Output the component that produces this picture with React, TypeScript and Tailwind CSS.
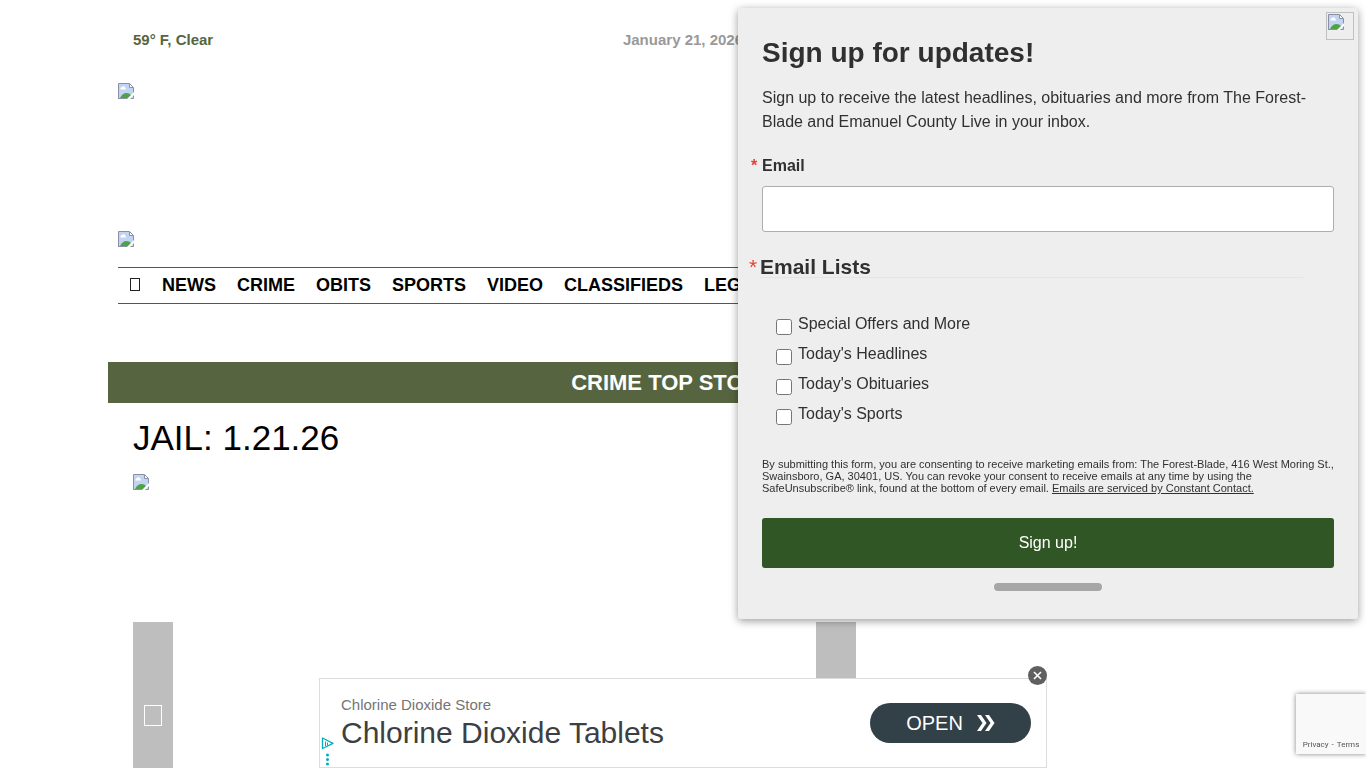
import { useState } from "react";

const navLinks = ["NEWS", "CRIME", "OBITS", "SPORTS", "VIDEO", "CLASSIFIEDS", "LEGALS"];

const emailLists = [
    "Special Offers and More",
    "Today's Headlines",
    "Today's Obituaries",
    "Today's Sports",
];

function MissingImage() {
    return (
        <svg className="block size-4" viewBox="0 0 16 16" aria-hidden="true">
            <path d="M0.5 0.5H11.5L15.5 4.5V15.5H0.5Z" fill="#c3d3f2" />
            <path d="M2.5 6.5V5.2Q2.6 4.2 3.8 4.2Q4.4 3 5.6 3.2Q6.8 3.3 7 4.4Q8 4.8 8 6.5Z" fill="#fff" />
            <path d="M2 15Q4.5 10 8.5 10Q11.5 10.2 13 12V15Z" fill="#4ea346" />
            <path d="M11.5 0.5V4.5H15.5Z" fill="#fff" />
            <path d="M0.5 16V0.5H11.5L15.5 4.5V15.5H0" fill="none" stroke="#8a8fa6" />
            <path d="M11.5 1V4.5H15" fill="none" stroke="#8a8fa6" />
            <path d="M16 9V12L12 16H9Z" fill="#fff" />
        </svg>
    );
}

function Header() {
    return (
        <header className="px-[10px]">
            <div className="grid grid-cols-3 px-[15px] pt-[30px] text-[15px] leading-5 font-bold">
                <span className="text-[#56653f]">59° F, Clear</span>
                <span className="text-center text-[#999]">January 21, 2026</span>
            </div>
            <a href="#" aria-label="Home page" className="mt-[33px] block h-[148px]">
                <MissingImage />
            </a>
            <a href="#" aria-label="Advertisement" className="block h-9">
                <MissingImage />
            </a>
            <nav className="flex h-[37px] items-center gap-[21px] border-y border-[#555] px-[10px] pb-[2px] text-lg font-bold text-black">
                <a href="#" aria-label="Home" className="pr-px pl-[2px]">
                    <span className="block h-[13px] w-[10px] border border-[#222]" />
                </a>
                {navLinks.map((link) => (
                    <a key={link} href="#" className="leading-5">{link}</a>
                ))}
            </nav>
        </header>
    );
}

function TopStories() {
    return (
        <main className="mt-[58px]">
            <h2 className="bg-[#56653f] text-center text-[22px] leading-[41px] font-bold text-white">CRIME TOP STORIES</h2>
            <article className="px-[25px]">
                <h1 className="pt-[14px] text-[35px] leading-[42px] text-black">JAIL: 1.21.26</h1>
                <div className="mt-[15px] h-[148px]">
                    <MissingImage />
                </div>
                <div className="flex w-[723px] justify-between">
                    <button aria-label="Previous" className="flex h-[186px] w-10 items-center justify-center bg-[#bebebe]">
                        <span className="h-[21px] w-[18px] border border-white" />
                    </button>
                    <button aria-label="Next" className="flex h-[186px] w-10 items-center justify-center bg-[#bebebe]">
                        <span className="h-[21px] w-[18px] border border-white" />
                    </button>
                </div>
            </article>
        </main>
    );
}

function SignupPopup({ onClose }: { onClose: () => void }) {
    return (
        <form
            className="fixed top-2 right-2 w-[620px] rounded-[3px] bg-[#eee] px-6 pb-7 text-base leading-6 text-[#303030] shadow-[0_2px_8px_rgba(0,0,0,0.4)]"
            onSubmit={(e) => e.preventDefault()}
        >
            <button
                type="button"
                aria-label="Close"
                onClick={onClose}
                className="absolute top-1 right-1 flex size-7 items-start border border-[#c0c0c0] p-px"
            >
                <MissingImage />
            </button>
            <h2 className="pt-[25px] text-[28px] leading-10 font-bold">Sign up for updates!</h2>
            <p className="mt-3 pt-px">
                Sign up to receive the latest headlines, obituaries and more from The Forest-Blade and Emanuel County Live in your inbox.
            </p>
            <label htmlFor="email" className="relative mt-5 block font-bold">
                <span className="absolute -left-[11px] text-[#e8402f]">*</span>
                Email
            </label>
            <input
                id="email"
                type="email"
                className="mt-2 block h-[46px] w-full rounded-[3px] border border-[#adadad] bg-white px-3"
            />
            <fieldset className="mt-5 -ml-[2px]">
                <legend className="relative w-[543px] border-b border-[#e4e4e4] pt-1 text-[21px] leading-[21px] font-bold">
                    <span className="absolute -left-[11px] font-normal text-[#e8402f]">*</span>
                    Email Lists
                </legend>
                <div className="mt-[31px] ml-4">
                    {emailLists.map((list) => (
                        <label key={list} className="flex h-[30px] gap-[6px] pt-[3px]">
                            <input type="checkbox" className="mt-[7px] size-4" />
                            {list}
                        </label>
                    ))}
                </div>
            </fieldset>
            <p className="mt-[29px] text-[11px] leading-3">
                By submitting this form, you are consenting to receive marketing emails from: The Forest-Blade, 416 West Moring St., Swainsboro, GA, 30401, US. You can revoke your consent to receive emails at any time by using the SafeUnsubscribe® link, found at the bottom of every email.{" "}
                <a href="#" className="underline">Emails are serviced by Constant Contact.</a>
            </p>
            <button type="submit" className="mt-6 h-[50px] w-full rounded-[3px] bg-[#315625] text-white">Sign up!</button>
            <div className="mx-auto mt-[15px] h-2 w-[108px] rounded-full bg-[#a6a6a6]" />
        </form>
    );
}

function AdBanner({ onClose }: { onClose: () => void }) {
    return (
        <aside className="fixed inset-x-0 bottom-0 mx-auto flex h-[90px] w-[728px] items-center justify-between border border-[#dcdcdc] bg-white pr-[15px] pl-[21px]">
            <div>
                <p className="text-[15px] leading-5 text-[#757575]">Chlorine Dioxide Store</p>
                <p className="text-[30px] leading-9 text-[#3c4043]">Chlorine Dioxide Tablets</p>
            </div>
            <button className="flex h-10 w-[161px] items-center justify-center gap-[14px] rounded-full bg-[#324047] text-xl text-white">
                OPEN
                <svg width="18" height="18" viewBox="0 0 18 18" fill="#fff" aria-hidden="true">
                    <path d="M0 1H4L9.5 9L4 17H0L5.5 9Z" />
                    <path d="M8 1H12L17.5 9L12 17H8L13.5 9Z" />
                </svg>
            </button>
            <svg className="absolute bottom-0 left-px" width="14" height="32" viewBox="0 0 14 32" fill="none" stroke="#00aebd" aria-hidden="true">
                <path d="M1.5 3V13.5L12 8.3Z" strokeWidth="1.3" strokeLinejoin="round" />
                <path d="M4.5 6.5V11M6.5 7.5V10.5" strokeWidth="1" />
                <g fill="#00aebd" stroke="none">
                    <circle cx="6.5" cy="20" r="1.5" />
                    <circle cx="6.5" cy="24.5" r="1.5" />
                    <circle cx="6.5" cy="29" r="1.5" />
                </g>
            </svg>
            <button
                aria-label="Close ad"
                onClick={onClose}
                className="absolute -top-[13px] -right-px flex size-[19px] items-center justify-center rounded-full bg-[#606060]"
            >
                <svg width="9" height="9" viewBox="0 0 9 9" stroke="#fff" strokeWidth="1.6" aria-hidden="true">
                    <path d="M1 1L8 8M8 1L1 8" />
                </svg>
            </button>
        </aside>
    );
}

export default function App() {
    const [showPopup, setShowPopup] = useState(true);
    const [showAd, setShowAd] = useState(true);

    return (
        <div className="h-screen overflow-hidden bg-white font-['Liberation_Sans',Arial,sans-serif]">
            <div className="mx-auto max-w-[1150px]">
                <Header />
                <TopStories />
            </div>
            {showPopup && <SignupPopup onClose={() => setShowPopup(false)} />}
            {showAd && <AdBanner onClose={() => setShowAd(false)} />}
            <div className="fixed right-0 bottom-[14px] flex h-[60px] w-[70px] items-end justify-center gap-[3px] bg-[#f9f9f9] pb-1 font-[Roboto,sans-serif] text-[8px] leading-[10px] text-[#555] shadow-[0_0_5px_gray]">
                <a href="#">Privacy</a>
                <span>-</span>
                <a href="#">Terms</a>
            </div>
        </div>
    );
}
